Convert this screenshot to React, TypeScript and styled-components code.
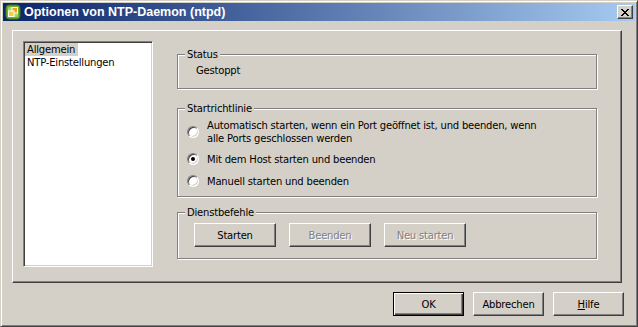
import React, { ReactElement } from 'react';
import styled, { createGlobalStyle } from 'styled-components';

const FONT = '"DejaVu Sans", "Liberation Sans", sans-serif';

const GlobalStyle = createGlobalStyle`
  html, body {
    margin: 0;
    padding: 0;
    background: #d4d0c8;
  }
  body {
    font-family: ${FONT};
    font-size: 10px;
    letter-spacing: -0.2px;
    color: #000;
  }
`;

const Window = styled.div`
  box-sizing: border-box;
  width: 638px;
  height: 327px;
  display: flex;
  flex-direction: column;
  padding: 2px;
  background: #d4d0c8;
  border: 1px solid;
  border-color: #d4d0c8 #404040 #404040 #d4d0c8;
  box-shadow: inset 1px 1px #fff, inset -1px -1px #808080;
`;

const TitleBar = styled.div`
  height: 18px;
  display: flex;
  align-items: center;
  padding: 0 2px;
  background: linear-gradient(to right, #0a246a, #a6caf0);
`;

const TitleText = styled.div`
  flex: 1;
  margin-left: 3px;
  color: #fff;
  font-family: "Liberation Sans", Arial, sans-serif;
  font-weight: bold;
  font-size: 12.5px;
  letter-spacing: 0;
  white-space: nowrap;
`;

const CloseButton = styled.div`
  box-sizing: border-box;
  width: 16px;
  height: 14px;
  display: flex;
  align-items: center;
  justify-content: center;
  background: #d4d0c8;
  border: 1px solid;
  border-color: #fff #404040 #404040 #fff;
  box-shadow: inset -1px -1px #808080;
`;

const Body = styled.div`
  flex: 1;
  display: flex;
  flex-direction: column;
  padding: 9px 11px 0 9px;
`;

const Panel = styled.div`
  box-sizing: border-box;
  height: 253px;
  margin-right: 2px;
  display: flex;
  padding: 10px 10px 0 10px;
  border: 1px solid;
  border-color: #fff #404040 #404040 #fff;
  box-shadow: inset -1px -1px #808080;
`;

const ListBox = styled.div`
  box-sizing: border-box;
  width: 130px;
  height: 226px;
  display: flex;
  flex-direction: column;
  align-items: flex-start;
  padding: 1px;
  background: #fff;
  border: 1px solid;
  border-color: #808080 #fff #fff #808080;
  box-shadow: inset 1px 1px #404040, inset -1px -1px #d4d0c8;
`;

const ListItem = styled.div<{ $selected?: boolean }>`
  height: 13px;
  line-height: 13px;
  padding: 0 3px 0 2px;
  white-space: nowrap;
  background: ${({ $selected }) => ($selected ? '#d4d0c8' : 'transparent')};
`;

const Content = styled.div`
  width: 420px;
  margin-left: 24px;
  display: flex;
  flex-direction: column;
`;

const GroupBox = styled.div<{ $mt: number; $h: number }>`
  position: relative;
  box-sizing: border-box;
  height: ${({ $h }) => $h}px;
  margin-top: ${({ $mt }) => $mt}px;
  border: 1px solid #808080;
  box-shadow: inset 1px 1px #fff, 1px 1px #fff;
`;

const GroupTitle = styled.div`
  position: absolute;
  top: -7px;
  left: 7px;
  padding: 0 2px;
  line-height: 13px;
  background: #d4d0c8;
  white-space: nowrap;
`;

const StatusText = styled.div`
  padding: 9px 0 0 18px;
  line-height: 13px;
`;

const OptionList = styled.div`
  display: flex;
  flex-direction: column;
  gap: 6px;
  padding: 10px 0 0 9px;
`;

const OptionRow = styled.div`
  min-height: 16px;
  display: flex;
  align-items: center;
  gap: 8px;
`;

const Radio = styled.span<{ $checked?: boolean }>`
  box-sizing: border-box;
  flex: none;
  width: 12px;
  height: 12px;
  display: flex;
  align-items: center;
  justify-content: center;
  border-radius: 50%;
  background: #fff;
  border: 1px solid;
  border-color: #808080 #fff #fff #808080;
  box-shadow: inset 1px 1px #404040, inset -1px -1px #d4d0c8;

  &::after {
    content: '';
    width: 4px;
    height: 4px;
    border-radius: 50%;
    background: ${({ $checked }) => ($checked ? '#000' : 'transparent')};
  }
`;

const OptionLabel = styled.div`
  line-height: 13px;
`;

const ButtonRow = styled.div<{ $end?: boolean }>`
  display: flex;
  justify-content: ${({ $end }) => ($end ? 'flex-end' : 'flex-start')};
  gap: ${({ $end }) => ($end ? 9 : 13)}px;
`;

const CommandRow = styled(ButtonRow)`
  padding: 10px 0 0 16px;
`;

const DialogRow = styled(ButtonRow)`
  margin-top: 9px;
`;

const PushButton = styled.div<{ $w: number; $default?: boolean; $disabled?: boolean }>`
  box-sizing: border-box;
  width: ${({ $w }) => $w}px;
  height: 24px;
  display: flex;
  align-items: center;
  justify-content: center;
  background: #d4d0c8;
  border: 1px solid;
  border-color: ${({ $default }) => ($default ? '#000' : '#fff #404040 #404040 #fff')};
  box-shadow: ${({ $default }) =>
    $default ? 'inset 1px 1px #fff, inset -1px -1px #404040, inset -2px -2px #808080' : 'inset -1px -1px #808080'};
  color: ${({ $disabled }) => ($disabled ? '#808080' : '#000')};
  text-shadow: ${({ $disabled }) => ($disabled ? '1px 1px #fff' : 'none')};
  white-space: nowrap;

  u {
    text-decoration: underline;
    text-underline-offset: 1px;
  }
`;

function AppIcon(): ReactElement {
  return (
    <svg width="16" height="16" viewBox="0 0 16 16">
      <rect x="1" y="1" width="14" height="14" rx="3" fill="#6fae2c" stroke="#3d7a12" strokeWidth="1" />
      <rect x="3" y="3" width="10" height="10" rx="1.5" fill="#a6d66a" />
      <rect x="7" y="3.5" width="5.5" height="5.5" fill="#f0a020" stroke="#fff" strokeWidth="1" />
      <rect x="3.5" y="7" width="5.5" height="5.5" fill="#f8d030" stroke="#fff" strokeWidth="1" />
    </svg>
  );
}

function CloseGlyph(): ReactElement {
  return (
    <svg width="8" height="7" viewBox="0 0 8 7" shapeRendering="crispEdges">
      <path
        d="M0 0h2v1H0zM6 0h2v1H6zM1 1h2v1H1zM5 1h2v1H5zM2 2h4v1H2zM3 3h2v1H3zM2 4h4v1H2zM1 5h2v1H1zM5 5h2v1H5zM0 6h2v1H0zM6 6h2v1H6z"
        fill="#000"
      />
    </svg>
  );
}

function App(): ReactElement {
  return (
    <>
      <GlobalStyle />
      <Window>
        <TitleBar>
          <AppIcon />
          <TitleText>Optionen von NTP-Daemon (ntpd)</TitleText>
          <CloseButton>
            <CloseGlyph />
          </CloseButton>
        </TitleBar>
        <Body>
          <Panel>
            <ListBox>
              <ListItem $selected>Allgemein</ListItem>
              <ListItem>NTP-Einstellungen</ListItem>
            </ListBox>
            <Content>
              <GroupBox $mt={13} $h={35}>
                <GroupTitle>Status</GroupTitle>
                <StatusText>Gestoppt</StatusText>
              </GroupBox>
              <GroupBox $mt={19} $h={89}>
                <GroupTitle>Startrichtlinie</GroupTitle>
                <OptionList>
                  <OptionRow>
                    <Radio />
                    <OptionLabel>
                      Automatisch starten, wenn ein Port geöffnet ist, und beenden, wenn
                      <br />
                      alle Ports geschlossen werden
                    </OptionLabel>
                  </OptionRow>
                  <OptionRow>
                    <Radio $checked />
                    <OptionLabel>Mit dem Host starten und beenden</OptionLabel>
                  </OptionRow>
                  <OptionRow>
                    <Radio />
                    <OptionLabel>Manuell starten und beenden</OptionLabel>
                  </OptionRow>
                </OptionList>
              </GroupBox>
              <GroupBox $mt={15} $h={47}>
                <GroupTitle>Dienstbefehle</GroupTitle>
                <CommandRow>
                  <PushButton $w={82}>Starten</PushButton>
                  <PushButton $w={82} $disabled>
                    Beenden
                  </PushButton>
                  <PushButton $w={82} $disabled>
                    Neu starten
                  </PushButton>
                </CommandRow>
              </GroupBox>
            </Content>
          </Panel>
          <DialogRow $end>
            <PushButton $w={71} $default>
              OK
            </PushButton>
            <PushButton $w={71}>Abbrechen</PushButton>
            <PushButton $w={71}>
              <span>
                <u>H</u>ilfe
              </span>
            </PushButton>
          </DialogRow>
        </Body>
      </Window>
    </>
  );
}

export default App;
